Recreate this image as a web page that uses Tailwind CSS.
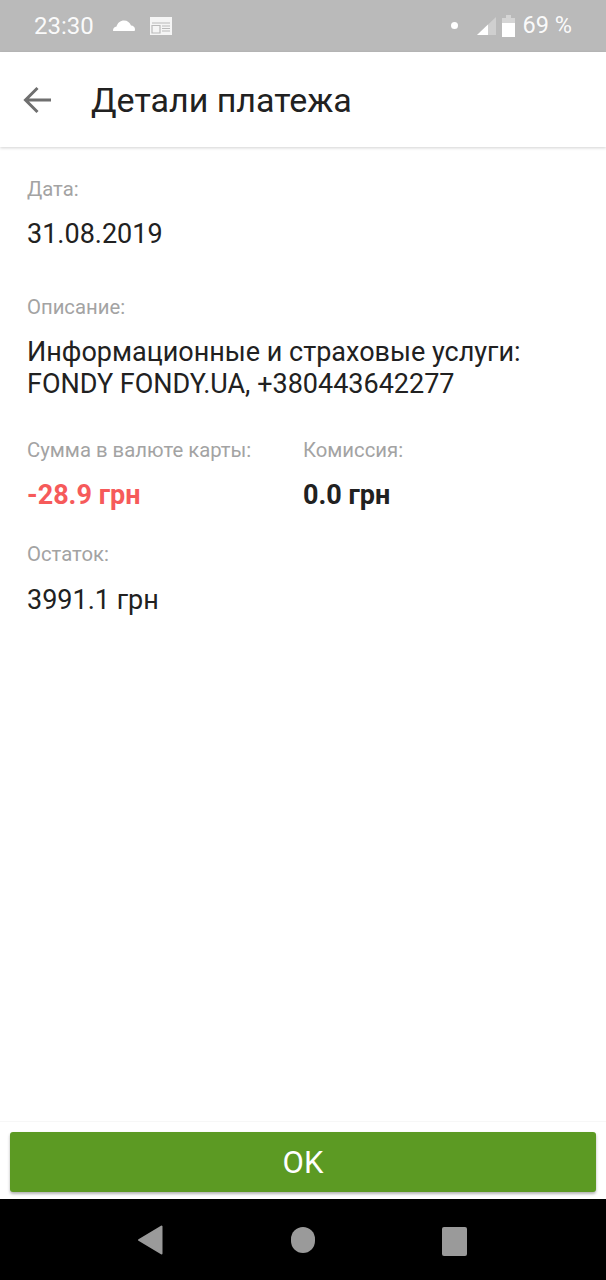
<!DOCTYPE html>
<html lang="ru">
<head>
    <meta charset="UTF-8">
    <meta name="viewport" content="width=device-width, initial-scale=1.0">
    <title>Детали платежа</title>
    <script src="https://cdn.jsdelivr.net/npm/@tailwindcss/browser@4"></script>
</head>
<body class="bg-white font-['Roboto',sans-serif]">
<div class="flex flex-col h-[1280px] w-[606px] overflow-hidden">

    <!-- Status bar -->
    <div class="h-[52px] shrink-0 bg-[#bababa] flex items-center pl-[34px] pr-[34px] text-white">
        <span class="text-[24px] leading-none text-white/95">23:30</span>
        <svg class="ml-[18px] mb-[3px]" width="24" height="16" viewBox="0 0 24 16" fill="#fff"><path d="M1 13.500c0-2 1.400-3.600 3.500-3.900C5.400 6 8.300 3.500 12 3.500c3.400 0 6 2 7 5 2.400.1 4 1.800 4 3.800 0 .6-.2 1.200-.4 1.700H1.300c-.2-.2-.3-.3-.3-.5z"/></svg>
        <svg class="ml-[13px] mb-[1px]" width="24" height="20" viewBox="0 0 24 20" fill="none"><path d="M1 1h22v18H1z" fill="#fff" fill-opacity=".85"/><path d="M3 7h18M3 9.500h8V17H3zM13 10h8M13 12.500h8M13 15h8" stroke="#bababa" stroke-width="1.200" fill="none"/></svg>
        <div class="ml-auto flex items-center">
            <span class="w-[7px] h-[7px] rounded-full bg-white mr-[18px] mb-[1px]"></span>
            <svg class="mb-[1px]" width="21" height="21" viewBox="0 0 21 21"><path d="M1 20 20 2v18z" fill="#fff" fill-opacity=".3"/><path d="M1 20 12 9.600V20z" fill="#fff"/></svg>
            <svg class="ml-[5px] mb-[1px]" width="13" height="24" viewBox="0 0 13 24"><path d="M4 1h5v3h4v5H0V4h4z" fill="#fff" fill-opacity=".4"/><path d="M0 9h13v14H0z" fill="#fff"/></svg>
            <span class="ml-[8px] text-[23.5px] leading-none text-white/95">69 %</span>
        </div>
    </div>

    <!-- Toolbar -->
    <div class="h-[95px] shrink-0 bg-white flex items-center shadow-[0_1px_3px_rgba(0,0,0,0.18)] relative">
        <svg class="ml-[23px]" width="29" height="28" viewBox="0 0 29 28" fill="none" stroke="#6f6f6f" stroke-width="3"><path d="M28 14H3M14.500 2 2.500 14l12 12"/></svg>
        <h1 class="ml-[39px] text-[34px] leading-none text-[#212121] font-normal">Детали платежа</h1>
    </div>

    <!-- Details -->
    <div class="flex-1 px-[27px] pt-[30px]">
        <div class="text-[20.3px] leading-[24px] text-[#a3a3a3]">Дата:</div>
        <div class="mt-[17px] text-[27px] leading-[32px] text-[#212121]">31.08.2019</div>

        <div class="mt-[45px] text-[20.3px] leading-[24px] text-[#a3a3a3]">Описание:</div>
        <div class="mt-[17px] text-[27px] leading-[32px] text-[#212121]">Информационные и страховые услуги:<br>FONDY FONDY.UA, +380443642277</div>

        <div class="mt-[38px] flex">
            <div class="w-[276px]">
                <div class="text-[20.3px] leading-[24px] text-[#a3a3a3]">Сумма в валюте карты:</div>
                <div class="mt-[17px] text-[27px] leading-[32px] font-bold text-[#f65a5a]">-28.9 грн</div>
            </div>
            <div>
                <div class="text-[20.3px] leading-[24px] text-[#a3a3a3]">Комиссия:</div>
                <div class="mt-[17px] text-[27px] leading-[32px] font-bold text-[#212121]">0.0 грн</div>
            </div>
        </div>

        <div class="mt-[31px] text-[20.3px] leading-[24px] text-[#a3a3a3]">Остаток:</div>
        <div class="mt-[18px] text-[27px] leading-[32px] text-[#212121]">3991.1 грн</div>
    </div>

    <!-- Button -->
    <div class="shrink-0 h-[78px] border-t border-[#f7f7f7] px-[10px] pt-[10px]">
        <button class="w-full h-[60px] pt-[3px] rounded-[3px] bg-[#5c9a23] text-white text-[31px] shadow-[0_2px_3px_rgba(0,0,0,0.3)]">OK</button>
    </div>

    <!-- Nav bar -->
    <div class="h-[81px] shrink-0 bg-black relative">
        <svg class="absolute left-[137px] top-[26px]" width="26" height="30" viewBox="0 0 26 30" fill="#9a9a9a"><path d="M24.500 1.500v27L2 15z" stroke="#9a9a9a" stroke-width="2" stroke-linejoin="round"/></svg>
        <div class="absolute left-[291px] top-[28px] w-[24px] h-[26px] rounded-full bg-[#9a9a9a]"></div>
        <div class="absolute left-[442px] top-[28px] w-[25px] h-[29px] rounded-[2px] bg-[#9a9a9a]"></div>
    </div>
</div>
</body>
</html>
